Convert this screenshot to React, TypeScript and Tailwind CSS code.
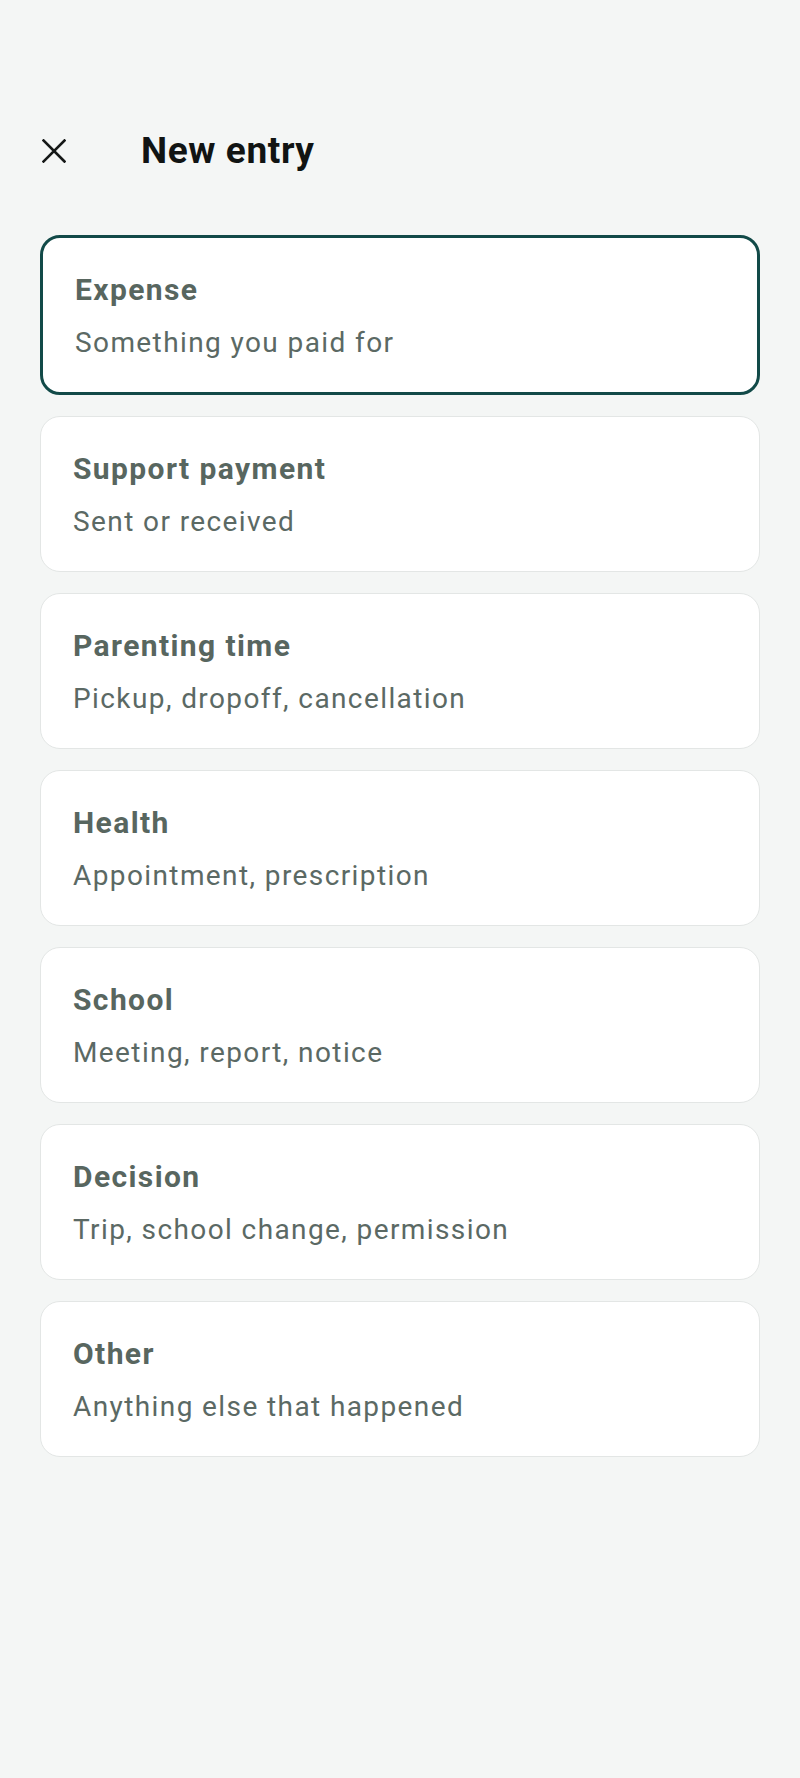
const entries = [
  { title: "Expense", desc: "Something you paid for" },
  { title: "Support payment", desc: "Sent or received" },
  { title: "Parenting time", desc: "Pickup, dropoff, cancellation" },
  { title: "Health", desc: "Appointment, prescription" },
  { title: "School", desc: "Meeting, report, notice" },
  { title: "Decision", desc: "Trip, school change, permission" },
  { title: "Other", desc: "Anything else that happened" },
];

function CloseIcon() {
  return (
    <svg width="24" height="24" viewBox="0 0 24 24" fill="none" stroke="currentColor" strokeWidth="2.6" strokeLinecap="square">
      <path d="M1.5 1.5 22.5 22.5M22.5 1.5 1.5 22.5" />
    </svg>
  );
}

export default function App() {
  const selected = 0;

  return (
    <div className="min-h-[1778px] bg-[#f4f6f5] pt-[129px] font-['Roboto','Noto_Sans',sans-serif]">
      {/* Header */}
      <div className="flex items-center h-[44px] pl-[42px]">
        <button className="w-[24px] h-[24px] flex items-center justify-center text-[#151817]">
          <CloseIcon />
        </button>
        <h1 className="ml-[75px] text-[37px] leading-[44px] font-bold tracking-[0.6px] text-[#111413]">New entry</h1>
      </div>

      {/* Entry types */}
      <div className="mt-[62px] px-[40px] flex flex-col gap-[21px]">
        {entries.map((e, i) => (
          <button
            key={e.title}
            className={`text-left bg-white rounded-[20px] px-8 pt-[34px] pb-[31px] ${
              i === selected ? "border-[3px] border-[#124a48]" : "border border-[#e3e6e5]"
            }`}
          >
            <div className="text-[30px] leading-[36px] font-bold tracking-[1.4px] text-[#58665f]">{e.title}</div>
            <div className="mt-[17px] text-[28px] leading-[36px] tracking-[1.4px] text-[#5b6964]">{e.desc}</div>
          </button>
        ))}
      </div>
    </div>
  );
}
